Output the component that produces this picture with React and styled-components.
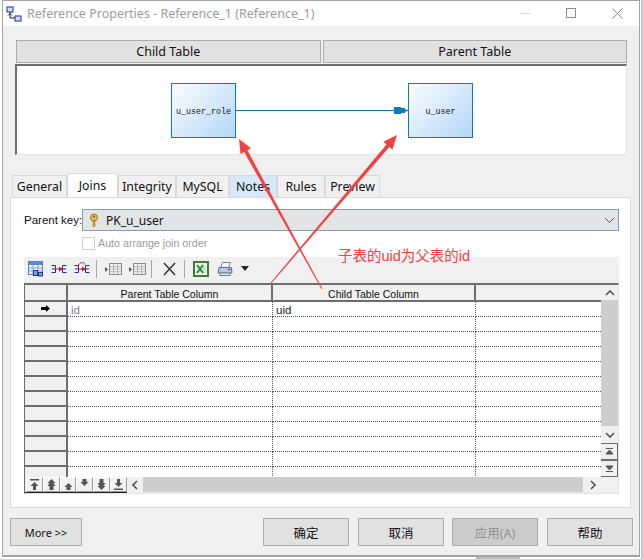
import styled, { createGlobalStyle } from "styled-components";

const GlobalStyle = createGlobalStyle`
  html, body { margin: 0; padding: 0; background: #fff; }
  body { width: 643px; height: 559px; overflow: hidden; font-family: "Noto Sans", "Noto Sans CJK SC", sans-serif; font-size: 12px; color: #111; }
  * { box-sizing: border-box; }
`;

const rowNums = Array.from({ length: 12 }, (_, i) => i);

export default function App() {
  return (
    <Page>
      <GlobalStyle />
      <Window>
        <TitleBar>
          <TitleIcon />
          <TitleText>Reference Properties - Reference_1 (Reference_1)</TitleText>
          <WindowButtons>
            <svg width="11" height="11"><path d="M0 5.5h10" stroke="#d8d8d8" /></svg>
            <svg width="11" height="11"><rect x=".5" y=".5" width="9" height="9" fill="none" stroke="#8c8c8c" /></svg>
            <svg width="11" height="11"><path d="M.5.5l10 10M10.5.5l-10 10" stroke="#8c8c8c" /></svg>
          </WindowButtons>
        </TitleBar>

        <Content>
          <HeaderButtons>
            <WinButton>Child Table</WinButton>
            <WinButton>Parent Table</WinButton>
          </HeaderButtons>
          <Diagram>
            <Node $left={154}>u_user_role</Node>
            <Link />
            <LinkHead width="13" height="7" viewBox="0 0 13 7">
              <path d="M0 0h7v1h4v1.500h2v2h-2V6H7v1H0z" fill="#0a7cbb" />
            </LinkHead>
            <Node $left={391}>u_user</Node>
          </Diagram>

          <Tabs>
            <Tab $w={55}>General</Tab>
            <Tab $w={51} $active>Joins</Tab>
            <Tab $w={58}>Integrity</Tab>
            <Tab $w={53}>MySQL</Tab>
            <Tab $w={48} $tint>Notes</Tab>
            <Tab $w={48}>Rules</Tab>
            <Tab $w={55}>Preview</Tab>
          </Tabs>

          <Panel>
            <KeyRow>
              <KeyLabel>Parent key:</KeyLabel>
              <Combo>
                <KeyIcon />
                <ComboText>PK_u_user</ComboText>
                <svg width="11" height="7" viewBox="0 0 11 7"><path d="M1 1l4.5 4.5L10 1" fill="none" stroke="#555" /></svg>
              </Combo>
            </KeyRow>
            <CheckRow>
              <CheckBox />
              <CheckLabel>Auto arrange join order</CheckLabel>
            </CheckRow>

            <Toolbar>
              <TableAddIcon />
              <JoinIcon $ml={7} />
              <JoinIcon $ml={7} $undo />
              <ToolSep $ml={6} />
              <GridArrowIcon $ml={8} />
              <GridArrowIcon $ml={7} />
              <ToolSep $ml={5} />
              <DeleteIcon />
              <ToolSep $ml={8} />
              <ExcelIcon />
              <PrintIcon />
              <DropCaret width="8" height="5" viewBox="0 0 8 5"><path d="M0 0h8L4 5z" fill="#222" /></DropCaret>
            </Toolbar>

            <Grid>
              <GridBody>
                <TableArea>
                  <HeadRow>
                    <HeadCorner />
                    <HeadCell $w={205}>Parent Table Column</HeadCell>
                    <HeadCell $w={203}>Child Table Column</HeadCell>
                    <HeadCell $w={125} />
                  </HeadRow>
                  <RowsClip>
                    {rowNums.map((n) => (
                      <Row key={n}>
                        <RowHead>
                          {n === 0 && (
                            <svg width="10" height="7" viewBox="0 0 10 7"><path d="M0 2h5V0l4 3.5L5 7V5H0z" fill="#000" /></svg>
                          )}
                        </RowHead>
                        <Cell $w={205} $dim>{n === 0 ? "id" : ""}</Cell>
                        <Cell $w={203}>{n === 0 ? "uid" : ""}</Cell>
                        <Cell $w={125} $last />
                      </Row>
                    ))}
                  </RowsClip>
                </TableArea>
                <VScroll>
                  <ScrollArrow $h={15}><Chevron d="M1 5l4-4 4 4" /></ScrollArrow>
                  <VThumb />
                  <ScrollArrow $h={17}><Chevron d="M1 1l4 4 4-4" /></ScrollArrow>
                  <StepButton>
                    <svg width="9" height="7" viewBox="0 0 9 7"><path d="M1 .5h7M4.5 2L8 6H1z" stroke="#555" fill="#555" /></svg>
                  </StepButton>
                  <StepButton>
                    <svg width="9" height="7" viewBox="0 0 9 7"><path d="M1 6.5h7M4.5 5L8 1H1z" stroke="#555" fill="#555" /></svg>
                  </StepButton>
                </VScroll>
              </GridBody>
              <GridFoot>
                <NavGroup>
                  <NavButton><path d="M1 0h9v1.500H1zM5.500 3l4 4H7v4H4V7H1.500z" /></NavButton>
                  <NavButton><path d="M5.500 0l4 4H7.500l2 3H7.500v4H3.500V7h-2l2-3h-2z" /></NavButton>
                  <NavButton><path d="M5.500 4l4 4H7.500v3h-4V8h-2z" /></NavButton>
                  <NavButton><path d="M3.500 0h4v3h2l-4 4-4-4h2z" /></NavButton>
                  <NavButton><path d="M3.500 0h4v4h2l-2 3h2l-4 4-4-4h2l-2-3h2z" /></NavButton>
                  <NavButton><path d="M4 0h3v4h2.500l-4 4-4-4H4zM1 9.500h9V11H1z" /></NavButton>
                </NavGroup>
                <HScroll>
                  <HArrow><svg width="6" height="10" viewBox="0 0 6 10"><path d="M5 1L1 5l4 4" fill="none" stroke="#555" strokeWidth="1.600" /></svg></HArrow>
                  <HThumb />
                  <HArrow><svg width="6" height="10" viewBox="0 0 6 10"><path d="M1 1l4 4-4 4" fill="none" stroke="#555" strokeWidth="1.600" /></svg></HArrow>
                </HScroll>
              </GridFoot>
            </Grid>
          </Panel>

          <Footer>
            <WinButton $w={72} $h={28} $fs={11}>More &gt;&gt;</WinButton>
            <FooterRight>
              <WinButton $w={86} $h={28} $mr={9}>确定</WinButton>
              <WinButton $w={86} $h={28} $mr={8}>取消</WinButton>
              <WinButton $w={86} $h={28} $mr={9} $disabled>应用(A)</WinButton>
              <WinButton $w={86} $h={28}>帮助</WinButton>
            </FooterRight>
          </Footer>
        </Content>
      </Window>

      <Annotation width="643" height="559" viewBox="0 0 643 559">
        <path d="M239 139L251 148.300L247.400 150.300L322.400 288.800L321.600 289.200L244.200 152.100L240.500 154.100Z" fill="#f5403f" />
        <path d="M397 135L392.500 149.600L389.300 146.900L271.400 283.300L270.600 282.700L386.500 144.500L383.300 141.800Z" fill="#f5403f" />
      </Annotation>
      <Note>子表的uid为父表的id</Note>
    </Page>
  );
}

function TitleIcon() {
  return (
    <svg width="16" height="16" viewBox="0 0 16 16">
      <rect x="1" y="1" width="6" height="5" fill="#cfe0ff" stroke="#1a2f9a" />
      <rect x="9" y="10" width="6" height="5" fill="#cfe0ff" stroke="#1a2f9a" />
      <path d="M4 6v6h5M2 9.500l2-2 2 2" fill="none" stroke="#222" />
    </svg>
  );
}

function KeyIcon() {
  return (
    <KeySvg width="10" height="15" viewBox="0 0 10 15">
      <circle cx="5" cy="4.500" r="3.500" fill="#e6c14d" stroke="#9a7a1e" />
      <circle cx="5" cy="3.500" r="1" fill="#6b5410" />
      <path d="M4 8v6l2-1V8z" fill="#d6ad3a" stroke="#9a7a1e" strokeWidth=".6" />
    </KeySvg>
  );
}

function TableAddIcon() {
  return (
    <svg width="16" height="16" viewBox="0 0 16 16">
      <rect x=".5" y=".5" width="14" height="13" fill="#e8eef8" stroke="#5b82bd" />
      <rect x="1" y="1" width="13" height="3" fill="#5b8ccb" />
      <path d="M1 7h13M1 10h13M5 4v9M10 4v9" stroke="#8ea3c6" />
      <rect x="5.500" y="9.500" width="4" height="5" fill="#7fa3dc" stroke="#1d3b8f" />
      <rect x="10.500" y="11.500" width="4" height="3.500" fill="#7fa3dc" stroke="#1d3b8f" />
    </svg>
  );
}

function JoinIcon({ $ml, $undo }) {
  return (
    <JoinSvg $ml={$ml} width="16" height="16" viewBox="0 0 16 16">
      <path d="M.5 4.500h4v7h-4M1 8h3M15.500 4.500h-4v7h4M12 8h3" fill="none" stroke="#1a2fb0" />
      <path d="M4 8h7" stroke="#c01818" />
      <path d="M11.500 8L8 5.500v5z" fill="#c01818" />
      {$undo && <path d="M4 5.500C5 1 10 .5 11 3.500" fill="none" stroke="#c01818" />}
    </JoinSvg>
  );
}

function GridArrowIcon({ $ml }) {
  return (
    <JoinSvg $ml={$ml} width="17" height="16" viewBox="0 0 17 16">
      <rect x="4.500" y="2.500" width="12" height="11" fill="#f4f4f4" stroke="#8a8a8a" />
      <path d="M5 5.500h11M5 8h11M5 10.700h11M8.500 3v10M12.500 3v10" stroke="#b5b5b5" />
      <path d="M0 6l3 2.500L0 11z" fill="#555" />
    </JoinSvg>
  );
}

function DeleteIcon() {
  return (
    <JoinSvg $ml={11} width="13" height="14" viewBox="0 0 13 14">
      <path d="M1 1l11 12M12 1L1 13" stroke="#333" strokeWidth="1.500" />
    </JoinSvg>
  );
}

function ExcelIcon() {
  return (
    <JoinSvg $ml={8} width="16" height="16" viewBox="0 0 16 16">
      <rect x="1" y="1" width="14" height="14" fill="#f4f9f1" stroke="#3b7d3a" strokeWidth="2" />
      <rect x="9" y="4" width="4" height="8" fill="#cfe6c4" />
      <path d="M4 4l6 8M10 4l-6 8" stroke="#1f8a2c" strokeWidth="2" />
    </JoinSvg>
  );
}

function PrintIcon() {
  return (
    <JoinSvg $ml={8} width="16" height="16" viewBox="0 0 16 16">
      <path d="M5.500 1.500h8l-2 5h-8z" fill="#fff" stroke="#6d7f96" />
      <path d="M2 6.500h12.500L15 12H1z" fill="#b9c7d8" stroke="#5f7086" />
      <rect x="3" y="12" width="10" height="2.500" fill="#e7edf4" stroke="#6d7f96" />
      <path d="M11 8.500h2.500" stroke="#2a4f8f" />
    </JoinSvg>
  );
}

function Chevron({ d }) {
  return (
    <svg width="10" height="6" viewBox="0 0 10 6"><path d={d} fill="none" stroke="#555" strokeWidth="1.600" /></svg>
  );
}

const Page = styled.div`
  position: relative;
  width: 643px;
  height: 559px;
  background: #fff;

  &::before {
    content: "";
    position: absolute;
    left: 476px;
    bottom: 0;
    width: 44px;
    height: 2px;
    background: #bdbdbd;
  }

  &::after {
    content: "";
    position: absolute;
    right: 0;
    top: 0;
    width: 2px;
    height: 559px;
    background: #c5c9d1;
  }
`;

const Window = styled.div`
  width: 638px;
  height: 557px;
  margin-left: 2px;
  display: flex;
  flex-direction: column;
  border: 1px solid #a3a3a3;
  border-bottom-width: 2px;
  background: #f0f0f0;
`;

const TitleBar = styled.div`
  height: 25px;
  flex: none;
  background: #fff;
  display: flex;
  align-items: center;
  padding-left: 3px;
`;

const TitleText = styled.span`
  margin-left: 5px;
  font-size: 12.5px;
  color: #9b9b9b;
`;

const WindowButtons = styled.div`
  margin-left: auto;
  margin-right: 16px;
  display: flex;
  gap: 35px;
`;

const Content = styled.div`
  flex: 1;
  display: flex;
  flex-direction: column;
  padding: 14px 6px 0 4px;
`;

const HeaderButtons = styled.div`
  display: flex;
  gap: 2px;
  padding-left: 9px;
  margin-right: 6px;
`;

const WinButton = styled.button`
  flex: ${(p) => (p.$w ? "none" : "1")};
  width: ${(p) => (p.$w ? `${p.$w}px` : "auto")};
  height: ${(p) => p.$h || 23}px;
  margin-right: ${(p) => p.$mr || 0}px;
  padding: 0;
  background: ${(p) => (p.$disabled ? "#cccccc" : "#e1e1e1")};
  border: 1px solid #adadad;
  color: ${(p) => (p.$disabled ? "#8f8f8f" : "#111")};
  font: ${(p) => p.$fs || 12.5}px "Noto Sans", "Noto Sans CJK SC", sans-serif;
`;

const Diagram = styled.div`
  position: relative;
  height: 91px;
  margin: 1px 6px 0 8px;
  background: #fff;
  border-top: 2px solid #6d6d6d;
  border-left: 2px solid #6d6d6d;
  border-right: 1px solid #e3e3e3;
  border-bottom: 1px solid #e3e3e3;
`;

const Node = styled.div`
  position: absolute;
  left: ${(p) => p.$left}px;
  top: 17px;
  width: 65px;
  height: 55px;
  padding-top: 1px;
  display: flex;
  align-items: center;
  justify-content: center;
  border: 1px solid #0a7cbb;
  background: linear-gradient(135deg, #fbfdff 0%, #b4d6f7 100%);
  font: 8.300px "Liberation Mono", monospace;
  color: #111;
`;

const Link = styled.div`
  position: absolute;
  left: 219px;
  top: 44px;
  width: 173px;
  height: 1px;
  background: #0a7cbb;
`;

const LinkHead = styled.svg`
  position: absolute;
  left: 377px;
  top: 41px;
`;

const Tabs = styled.div`
  display: flex;
  align-items: flex-end;
  height: 24px;
  margin: 18px 0 0 5px;
`;

const Tab = styled.div`
  width: ${(p) => p.$w}px;
  height: ${(p) => (p.$active ? 24 : 22)}px;
  display: flex;
  align-items: center;
  justify-content: center;
  background: ${(p) => (p.$active ? "#fff" : p.$tint ? "#d6e8f9" : "#f0f0f0")};
  border: 1px solid #d9d9d9;
  border-bottom: none;
  font-size: 12.3px;
`;

const Panel = styled.div`
  width: 621px;
  height: 311px;
  margin-left: 3px;
  background: #fff;
  border: 1px solid #d9d9d9;
  padding: 11px 11px 0 13px;
  display: flex;
  flex-direction: column;
`;

const KeyRow = styled.div`
  display: flex;
  align-items: center;
  height: 22px;
`;

const KeyLabel = styled.span`
  width: 58px;
  font: 11.500px "Liberation Sans", sans-serif;
  white-space: nowrap;
`;

const Combo = styled.div`
  width: 537px;
  height: 22px;
  display: flex;
  align-items: center;
  padding: 0 3px 0 6px;
  background: #e3e4e6;
  border: 1px solid #8a9bb0;
`;

const KeySvg = styled.svg`
  flex: none;
`;

const ComboText = styled.span`
  flex: 1;
  margin-left: 7px;
`;

const CheckRow = styled.div`
  display: flex;
  align-items: center;
  height: 14px;
  margin: 5px 0 0 58px;
`;

const CheckBox = styled.div`
  width: 13px;
  height: 13px;
  border: 1px solid #cfcfcf;
  background: #fff;
`;

const CheckLabel = styled.span`
  margin-left: 3px;
  font: 10.700px "Liberation Sans", sans-serif;
  color: #9b9b9b;
`;

const Toolbar = styled.div`
  height: 26px;
  width: 595px;
  margin-top: 7px;
  padding: 0 0 3px 4px;
  display: flex;
  align-items: center;
  background: #f0f0f0;
`;

const JoinSvg = styled.svg`
  flex: none;
  margin-left: ${(p) => p.$ml || 0}px;
`;

const ToolSep = styled.div`
  width: 1px;
  height: 18px;
  margin-left: ${(p) => p.$ml}px;
  background: #a8a8a8;
`;

const DropCaret = styled.svg`
  margin-left: 8px;
`;

const Grid = styled.div`
  width: 595px;
  height: 211px;
  display: flex;
  flex-direction: column;
  border-top: 2px solid #6d6d6d;
  border-left: 1px solid #6d6d6d;
  border-right: 1px solid #e3e3e3;
  border-bottom: 1px solid #e3e3e3;
  background: #f0f0f0;
`;

const GridBody = styled.div`
  display: flex;
  height: 192px;
`;

const TableArea = styled.div`
  width: 576px;
  display: flex;
  flex-direction: column;
`;

const HeadRow = styled.div`
  display: flex;
  height: 17px;
  flex: none;
  border-bottom: 2px solid #6d6d6d;
`;

const HeadCorner = styled.div`
  width: 43px;
  flex: none;
  border-right: 2px solid #6d6d6d;
`;

const HeadCell = styled.div`
  width: ${(p) => p.$w}px;
  flex: none;
  display: flex;
  align-items: center;
  justify-content: center;
  padding-top: 2px;
  border-right: 2px solid #6d6d6d;
  font: 10.500px "Liberation Sans", sans-serif;
  &:last-child { border-right: none; }
`;

const RowsClip = styled.div`
  flex: 1;
  overflow: hidden;
  background: #fff;
`;

const Row = styled.div`
  display: flex;
  height: 15px;
`;

const RowHead = styled.div`
  width: 43px;
  flex: none;
  display: flex;
  align-items: center;
  justify-content: center;
  background: #f0f0f0;
  border-right: 2px solid #6d6d6d;
  border-bottom: 2px solid #6d6d6d;
`;

const Cell = styled.div`
  width: ${(p) => p.$w}px;
  flex: none;
  padding: 2px 0 0 3px;
  font: 11.500px/12px "Liberation Sans", sans-serif;
  color: ${(p) => (p.$dim ? "#7f7f9a" : "#222")};
  border-bottom: 1px dotted #555;
  border-right: ${(p) => (p.$last ? "none" : "1px dotted #555")};
`;

const VScroll = styled.div`
  width: 17px;
  flex: none;
  display: flex;
  flex-direction: column;
`;

const ScrollArrow = styled.div`
  height: ${(p) => p.$h}px;
  flex: none;
  display: flex;
  align-items: center;
  justify-content: center;
`;

const VThumb = styled.div`
  flex: 1;
  background: #cdcdcd;
`;

const StepButton = styled.div`
  height: 17px;
  flex: none;
  display: flex;
  align-items: center;
  justify-content: center;
  border-right: 1px solid #6d6d6d;
  border-top: 1px solid #6d6d6d;
  border-bottom: 1px solid #6d6d6d;
  background: #f0f0f0;
`;

const GridFoot = styled.div`
  display: flex;
  height: 16px;
`;

const NavGroup = styled.div`
  display: flex;
  flex: none;
  padding-left: 1px;
  height: 16px;
  border-bottom: 1px solid #222;
  width: 102px;
`;

const NavBtn = styled.div`
  width: 17px;
  height: 15px;
  display: flex;
  align-items: center;
  justify-content: center;
  background: #f2f2f2;
  border: 1px solid #fff;
  border-right-color: #9a9a9a;
  border-bottom-color: #9a9a9a;
`;

function NavButton({ children }) {
  return (
    <NavBtn>
      <svg width="11" height="11" viewBox="0 0 11 11" fill="#555">{children}</svg>
    </NavBtn>
  );
}

const HScroll = styled.div`
  flex: 1;
  display: flex;
  height: 15px;
`;

const HArrow = styled.div`
  width: 16px;
  flex: none;
  display: flex;
  align-items: center;
  justify-content: center;
`;

const HThumb = styled.div`
  width: 440px;
  background: #cdcdcd;
  margin-right: 2px;
`;

const Footer = styled.div`
  display: flex;
  align-items: center;
  justify-content: space-between;
  margin: 10px 0 0 0;
  padding-left: 3px;
`;

const FooterRight = styled.div`
  display: flex;
`;

const Annotation = styled.svg`
  position: absolute;
  left: 0;
  top: 0;
  pointer-events: none;
`;

const Note = styled.div`
  position: absolute;
  left: 338px;
  top: 244px;
  font: 14.500px "Liberation Sans", "Noto Sans CJK SC", sans-serif;
  color: #f5403f;
`;
